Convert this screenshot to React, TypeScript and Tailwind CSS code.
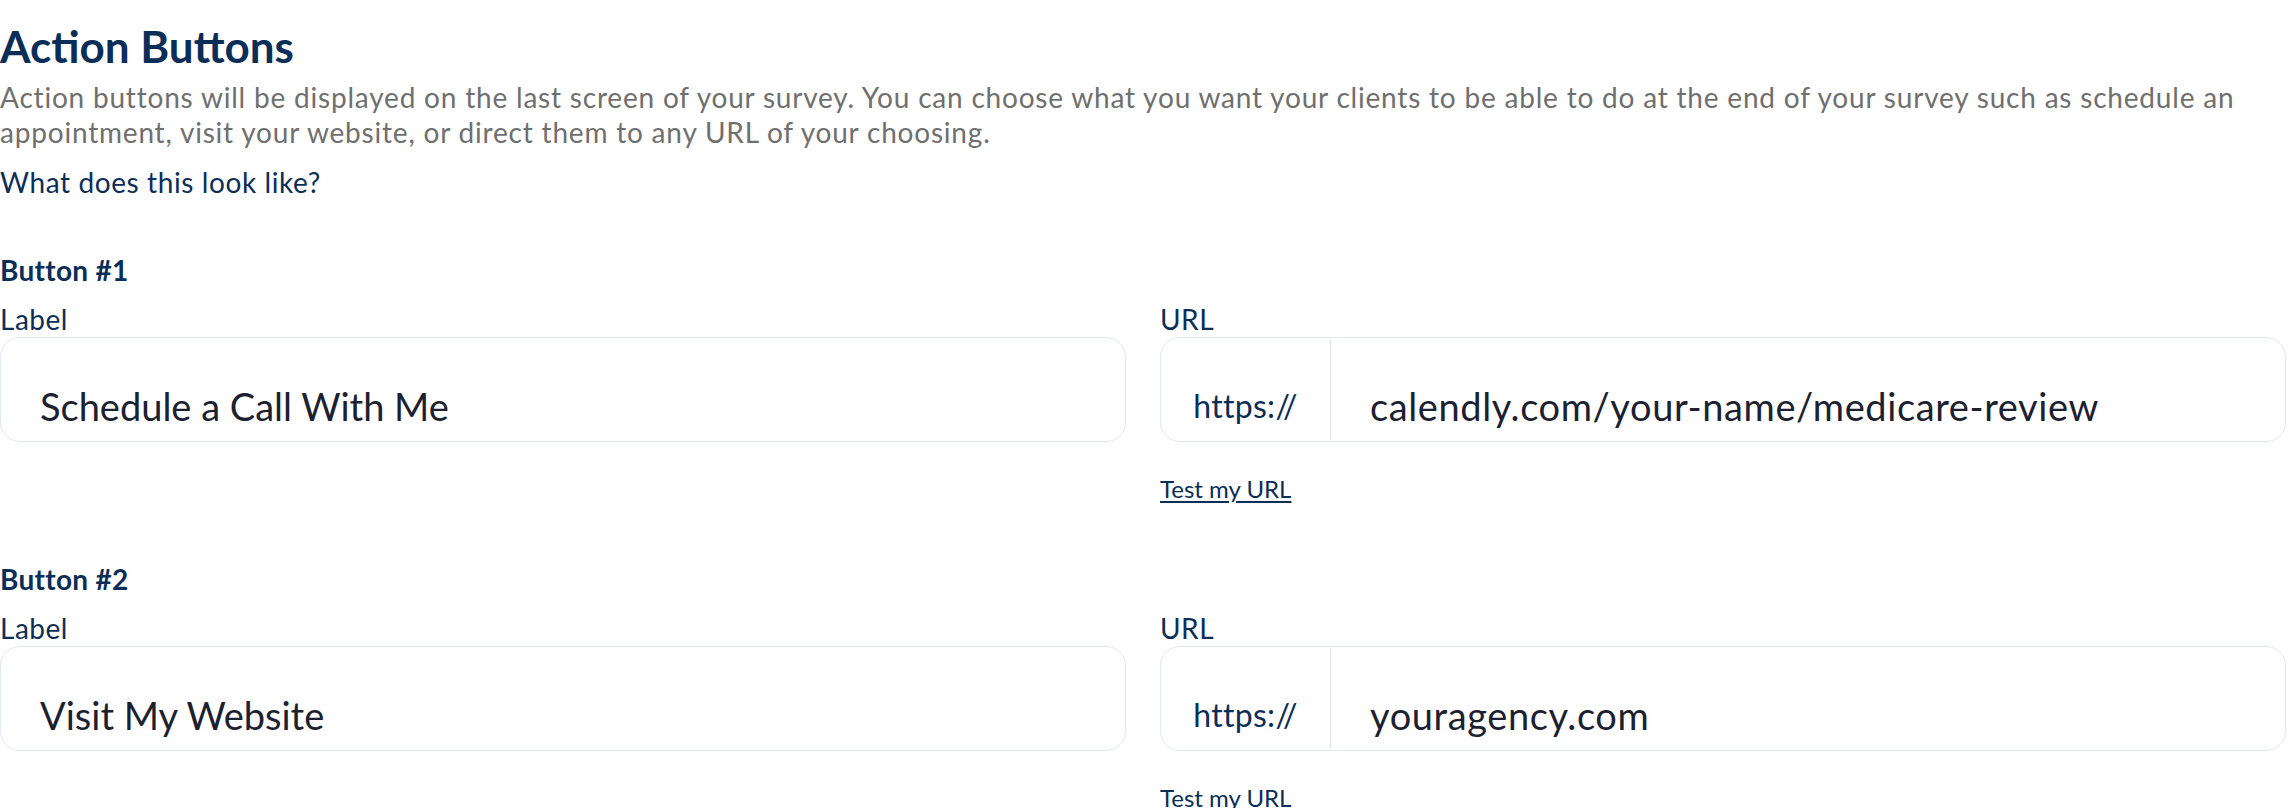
import type { ReactNode } from "react";

const FONT = "font-['Lato','Noto_Sans',sans-serif]";

function Field({ label, children }: { label: string; children: ReactNode }) {
  return (
    <div className="flex flex-col">
      <span className="text-[28px] leading-[35px] tracking-[0.5px] text-[#0b2e59]">{label}</span>
      {children}
    </div>
  );
}

function ButtonSection({ n, label, url }: { n: number; label: string; url: string }) {
  return (
    <section className="flex flex-col">
      <h3 className="text-[28px] font-bold leading-[36px] tracking-[0.3px] text-[#0b2e59]">Button #{n}</h3>
      <div className="mt-[14px] grid grid-cols-2 gap-x-[34px]">
        <Field label="Label">
          <div className="flex h-[105px] items-end rounded-[20px] border border-[#e3e8ef] bg-white pb-[12px] pl-[39px]">
            <span className="text-[38px] leading-[46px] text-[#1b2130]">{label}</span>
          </div>
        </Field>
        <Field label="URL">
          <div className="flex h-[105px] rounded-[20px] border border-[#e3e8ef] bg-white">
            <div className="flex w-[170px] shrink-0 items-end justify-center border-r border-[#e3e8ef] pb-[12px]">
              <span className="text-[32px] leading-[46px] tracking-[0.3px] text-[#0b2e59]">https://</span>
            </div>
            <div className="flex flex-1 items-end pb-[12px] pl-[39px]">
              <span className="text-[38px] leading-[46px] tracking-[0.6px] text-[#1b2130]">{url}</span>
            </div>
          </div>
          <a href="#" className="mt-[33px] self-start text-[24px] leading-[28px] text-[#0b2e59] underline underline-offset-[3px]">
            Test my URL
          </a>
        </Field>
      </div>
    </section>
  );
}

export default function App() {
  return (
    <div className={`${FONT} min-h-screen w-[2286px] bg-white pt-[20px]`}>
      <h1 className="text-[44px] font-bold leading-[52px] text-[#0b2e59]">Action Buttons</h1>
      <p className="mt-[8px] text-[28px] leading-[35px] tracking-[0.8px] text-[#6f6f6f]">
        Action buttons will be displayed on the last screen of your survey. You can choose what you want your clients to be able to do at the end of your survey such as schedule an appointment, visit your website, or direct them to any URL of your choosing.
      </p>
      <a href="#" className="mt-[15px] block text-[28px] leading-[35px] tracking-[0.6px] text-[#0b2e59]">
        What does this look like?
      </a>
      <div className="mt-[52px] flex flex-col gap-[58px]">
        <ButtonSection n={1} label="Schedule a Call With Me" url="calendly.com/your-name/medicare-review" />
        <ButtonSection n={2} label="Visit My Website" url="youragency.com" />
      </div>
    </div>
  );
}
